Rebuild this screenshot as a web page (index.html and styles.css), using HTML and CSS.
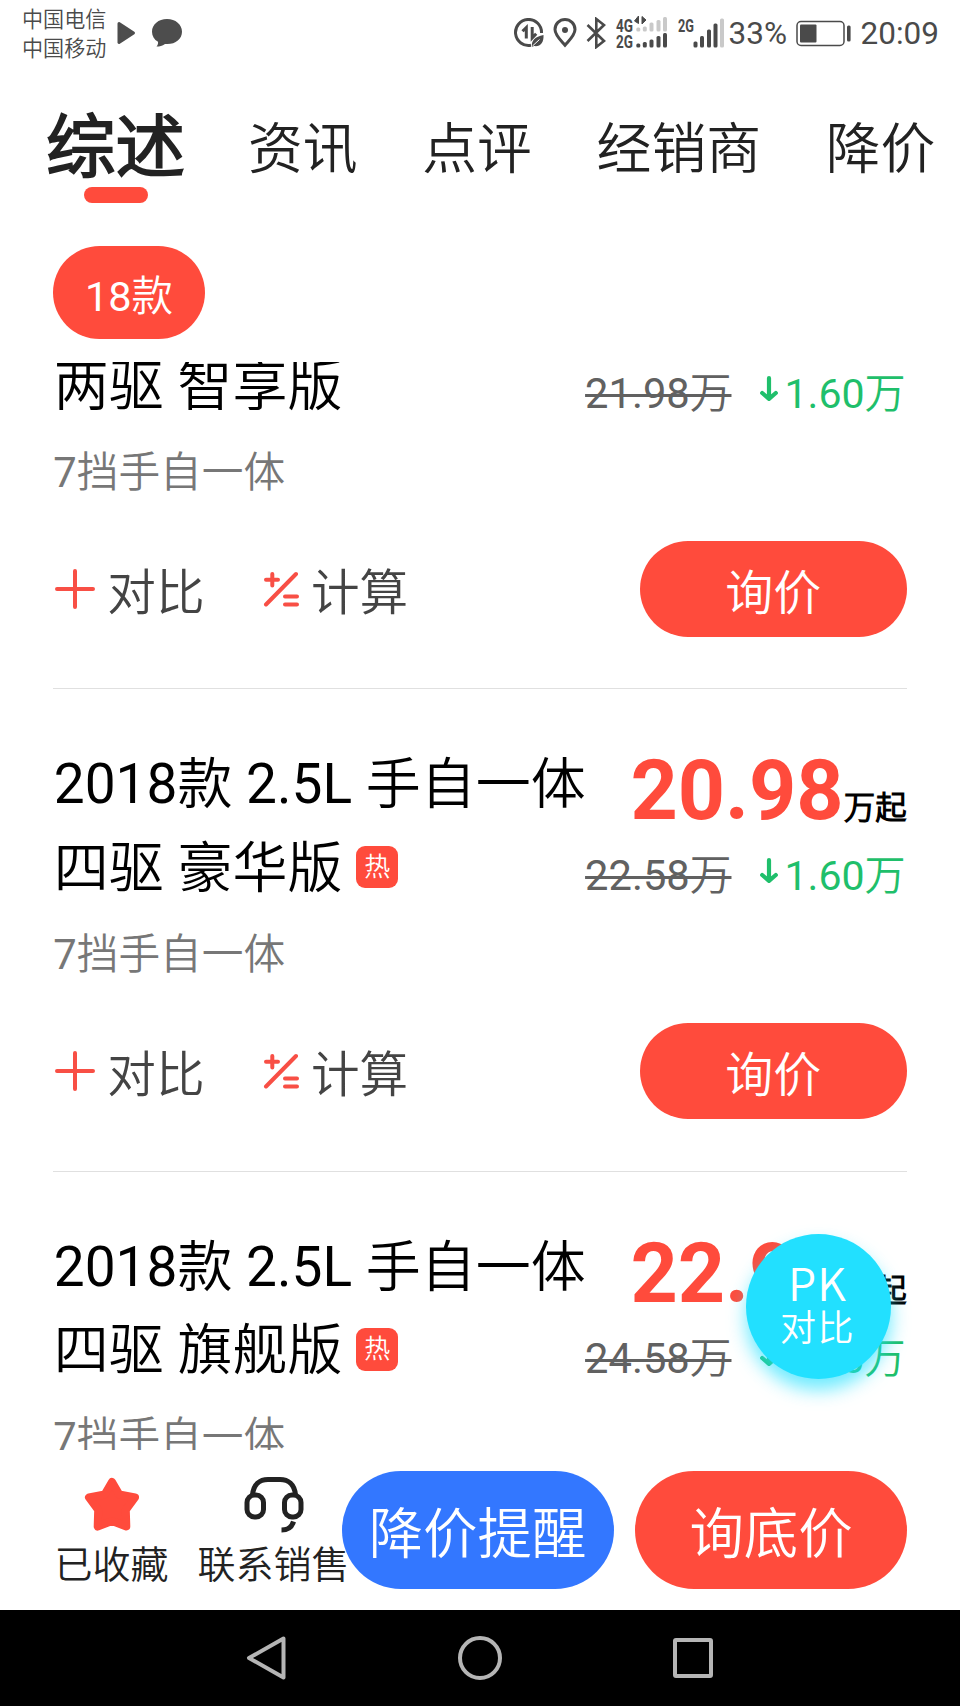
FILE: index.html
```html
<!DOCTYPE html>
<html lang="zh-CN">
<head>
<meta charset="utf-8">
<title>综述</title>
<link rel="stylesheet" href="styles.css">
</head>
<body>
<svg width="0" height="0" class="defs">
  <symbol id="plus" viewBox="0 0 40 40"><path d="M20 2v36M2 20h36" fill="none" stroke="#f84f45" stroke-width="4" stroke-linecap="round"/></symbol>
  <symbol id="calc" viewBox="0 0 36 36"><path d="M9.300 3v11.500M3 8.800h12M33 3L3 33.500M22 25.500h12M22 33.500h12" fill="none" stroke="#f84f45" stroke-width="4" stroke-linecap="round"/></symbol>
  <symbol id="down" viewBox="0 0 18 26"><path d="M9 2.200v20M2.200 17L9 22.800 15.800 17" fill="none" stroke="#1fbf6b" stroke-width="4.200" stroke-linecap="round" stroke-linejoin="round"/></symbol>
</svg>
<div class="screen">
  <header class="status">
    <div class="carriers"><span>中国电信</span><span>中国移动</span></div>
    <svg class="play" width="19" height="24" viewBox="0 0 19 24"><path d="M2 2.500L16.500 12 2 21.500z" fill="#4d4d4d" stroke="#4d4d4d" stroke-width="3" stroke-linejoin="round"/></svg>
    <svg class="chat" width="32" height="30" viewBox="0 0 32 30"><path d="M16 1C7.500 1 1 6.500 1 13.700c0 4.300 2.200 7.800 6 10.100.3 1.700-.2 3.300-1.500 4.800 3.200 0 5.800-1 8.500-2.700C23.500 27 31 21.500 31 13.700 31 6.500 24.500 1 16 1z" fill="#4d4d4d"/></svg>
    <div class="status-right">
      <svg width="30" height="30" viewBox="0 0 30 30"><path d="M17 27.200A13 13 0 1 1 27.500 15" fill="none" stroke="#4a4a4a" stroke-width="3"/><path d="M12.300 20.500V9.500L8.500 13.300M18.200 9v11l4-4.300" fill="none" stroke="#4a4a4a" stroke-width="3"/><path d="M29.500 17c.5 8-3.500 12-9.500 11l-2 1c-1-6 3-10.500 11.500-12z" fill="#4a4a4a"/><path d="M18.500 28l7-6.500" stroke="#fff" stroke-width="1"/></svg>
      <svg class="pin" width="24" height="30" viewBox="0 0 24 30"><path d="M12 27.300C7 21.500 2 17 2 11.500a10 10 0 0 1 20 0C22 17 17 21.500 12 27.300z" fill="none" stroke="#4a4a4a" stroke-width="3"/><circle cx="12" cy="12" r="3" fill="#4a4a4a"/></svg>
      <svg class="bt" width="20" height="32" viewBox="0 0 20 32"><path d="M1.500 8L18 24l-7.700 6V2L18 8 1.500 24" fill="none" stroke="#4a4a4a" stroke-width="2.600"/></svg>
      <svg class="sig" width="110" height="34" viewBox="0 0 110 34">
        <g class="net"><text x="0" y="15.500" textLength="17" lengthAdjust="spacingAndGlyphs">4G</text><text x="0" y="32" textLength="17" lengthAdjust="spacingAndGlyphs">2G</text><text x="62" y="15.500" textLength="16" lengthAdjust="spacingAndGlyphs">2G</text></g>
        <path d="M22.500 7.500V0l-4 5zM26 .5V8l4-4z" fill="#4a4a4a" stroke="#4a4a4a" stroke-width="1"/>
        <g fill="#c9c9c9"><rect x="20.300" y="11.500" width="4" height="4" rx="1.500"/><rect x="26.800" y="10.500" width="4" height="5" rx="1.500"/><rect x="33.500" y="6.500" width="4" height="9" rx="1.500"/><rect x="40.500" y="4" width="4" height="11.500" rx="1.500"/><rect x="47" y="1" width="4" height="14.500" rx="1.500"/><rect x="104" y="2.500" width="4" height="29" rx="1.500"/></g>
        <g fill="#4a4a4a"><rect x="20.300" y="27.500" width="4" height="4" rx="1.500"/><rect x="26.800" y="26" width="4" height="5.500" rx="1.500"/><rect x="33.500" y="23.500" width="4" height="8" rx="1.500"/><rect x="40.500" y="20" width="4" height="11.500" rx="1.500"/><rect x="47" y="17" width="4" height="14.500" rx="1.500"/><rect x="77.500" y="25.500" width="4" height="6" rx="1.500"/><rect x="84" y="20" width="4" height="11.500" rx="1.500"/><rect x="91" y="13.500" width="4" height="18" rx="1.500"/><rect x="97.500" y="7.500" width="4" height="24" rx="1.500"/></g>
      </svg>
      <span class="pct">33%</span>
      <svg class="batt" width="56" height="27" viewBox="0 0 56 27"><rect x="1" y="1.500" width="47" height="24" rx="4" fill="none" stroke="#4a4a4a" stroke-width="1.500"/><rect x="4" y="4.500" width="16.500" height="18" rx="1" fill="#4a4a4a"/><rect x="51" y="5.500" width="3.600" height="16" rx="1.500" fill="#4a4a4a"/></svg>
      <span class="time">20:09</span>
    </div>
  </header>

  <nav class="tabs">
    <span class="tab active">综述</span><span class="tab">资讯</span><span class="tab">点评</span><span class="tab">经销商</span><span class="tab">降价</span>
  </nav>

  <div class="filter"><span class="pill">18款</span></div>

  <main class="list">
    <section class="card first">
      <div class="head">
        <div class="title">两驱 智享版</div>
        <div class="prices"><div class="sub-price"><s>21.98万</s><span class="drop"><svg width="18" height="26"><use href="#down"/></svg>1.60万</span></div></div>
      </div>
      <div class="gear">7挡手自一体</div>
      <div class="actions"><span class="act cmp"><svg width="40" height="40"><use href="#plus"/></svg><span>对比</span></span><span class="act"><svg width="36" height="36"><use href="#calc"/></svg><span>计算</span></span><span class="ask">询价</span></div>
    </section>
    <section class="card">
      <div class="head">
        <div class="title">2018款 2.5L 手自一体<br>四驱 豪华版<span class="hot">热</span></div>
        <div class="prices"><div class="price"><b>20.98</b><span>万起</span></div><div class="sub-price"><s>22.58万</s><span class="drop"><svg width="18" height="26"><use href="#down"/></svg>1.60万</span></div></div>
      </div>
      <div class="gear">7挡手自一体</div>
      <div class="actions"><span class="act cmp"><svg width="40" height="40"><use href="#plus"/></svg><span>对比</span></span><span class="act"><svg width="36" height="36"><use href="#calc"/></svg><span>计算</span></span><span class="ask">询价</span></div>
    </section>
    <section class="card">
      <div class="head">
        <div class="title">2018款 2.5L 手自一体<br>四驱 旗舰版<span class="hot">热</span></div>
        <div class="prices"><div class="price"><b>22.98</b><span>万起</span></div><div class="sub-price"><s>24.58万</s><span class="drop"><svg width="18" height="26"><use href="#down"/></svg>1.60万</span></div></div>
      </div>
      <div class="gear">7挡手自一体</div>
    </section>
  </main>

  <footer class="bar">
    <div class="tool fav">
      <svg width="56" height="56" viewBox="0 0 56 56"><path d="M28 5L35.300 17.500 51 20.500 41.800 33 42.300 49.500 28 44 13.700 49.500 14.200 33 5 20.500 20.700 17.500z" fill="#ff4b3c" stroke="#ff4b3c" stroke-width="8" stroke-linejoin="round"/></svg>
      <span>已收藏</span>
    </div>
    <div class="tool contact">
      <svg width="60" height="58" viewBox="0 0 60 58"><g fill="none" stroke="#222" stroke-width="5"><path d="M8.500 19C9.500 8 16 3.500 24 3.500h12C44 3.500 50.500 8 51.500 19"/><rect x="3" y="19" width="16.500" height="22" rx="7.500"/><rect x="40.500" y="19" width="16.500" height="22" rx="7.500"/><path d="M49.500 45.500C48 51 43.500 54 37.500 54"/></g></svg>
      <span>联系销售</span>
    </div>
    <span class="cta blue">降价提醒</span>
    <span class="cta red">询底价</span>
  </footer>

  <div class="sysnav">
    <svg width="44" height="48" viewBox="0 0 44 48"><path d="M39.500 4.500L5 24l34.500 19.500z" fill="none" stroke="#b5b5b5" stroke-width="4" stroke-linejoin="round"/></svg>
    <svg width="48" height="48" viewBox="0 0 48 48"><circle cx="24" cy="24" r="20" fill="none" stroke="#b5b5b5" stroke-width="4"/></svg>
    <svg width="44" height="44" viewBox="0 0 44 44"><rect x="4" y="4" width="36" height="36" rx="1" fill="none" stroke="#b5b5b5" stroke-width="4"/></svg>
  </div>

  <div class="pk"><span class="pk-en">PK</span><span class="pk-zh">对比</span></div>
</div>
</body>
</html>
```
FILE: styles.css
```css
* { box-sizing: border-box; }
body { margin: 0; background: #fff; font-family: Roboto, "Noto Sans CJK SC DemiLight", "Noto Sans CJK SC", sans-serif; font-weight: 400; }
svg { display: block; flex: none; }
.defs { position: absolute; }
.screen { position: relative; width: 960px; height: 1706px; overflow: hidden; display: flex; flex-direction: column; white-space: nowrap; }

.status { height: 66px; flex: none; display: flex; align-items: center; padding: 0 21px 0 22px; color: #4a4a4a; }
.carriers { display: flex; flex-direction: column; font-size: 21.1px; line-height: 29px; padding-top: 1px; }
.play { margin-left: 11px; }
.chat { margin-left: 15px; }
.status-right { margin-left: auto; display: flex; align-items: center; }
.pin { margin-left: 9px; }
.bt { margin-left: 9px; }
.sig { margin-left: 10px; overflow: visible; }
.net { font: 700 17.500px Roboto, sans-serif; fill: #4a4a4a; }
.pct, .time { font-size: 31.5px; line-height: 66px; padding-top: 2px; }
.pct { margin-left: 3px; }
.batt { margin-left: 8.5px; }
.time { margin-left: 9px; }

.tabs { height: 180px; flex: none; display: flex; padding: 0 0 0 46px; color: #222; }
.tab { font-size: 54.8px; line-height: 80px; padding-top: 42.5px; margin-right: 64.7px; }
.tab.active { font-size: 69.5px; font-weight: 700; line-height: 82px; padding-top: 42px; display: flex; flex-direction: column; align-items: center; margin-right: 63px; }
.tab.active::after { content: ""; width: 64px; height: 16px; margin-top: -3px; border-radius: 8px; background: #ff4b3c; }

.filter { height: 116px; flex: none; padding-left: 53px; }
.pill { display: flex; align-items: center; justify-content: center; width: 152px; height: 93px; border-radius: 47px; background: #ff4b3c; color: #fff; font-size: 41.5px; }

.list { height: 1088px; flex: none; overflow: hidden; padding: 0 53.3px; }
.card { height: 482.4px; padding-top: 52px; border-bottom: 1.5px solid #e0e0e0; }
.card:last-child { border: 0; }
.card.first { display: flow-root; height: 327.2px; padding-top: 0; }
.card.first .head { margin-top: -19.5px; height: 83.5px; }
.head { height: 167px; display: flex; justify-content: space-between; }
.title { font-size: 55px; line-height: 83.5px; padding: 2px 0 0 0.5px; color: #000; }
.hot { display: inline-block; width: 42.5px; height: 42.5px; line-height: 42px; margin-left: 13.5px; border-radius: 9px; background: #ff4b3c; color: #fff; font-size: 26px; text-align: center; vertical-align: 11px; }
.prices { display: flex; flex-direction: column; align-items: flex-end; margin-left: -24px; }
.price { display: flex; align-items: baseline; height: 99px; line-height: 99px; }
.price b { font-size: 82.5px; color: #ff4b3c; font-weight: 700; }
.price span { font-size: 31.5px; font-weight: 700; color: #000; padding-top: 0; }
.sub-price { display: flex; font-size: 41.7px; line-height: 72px; }
.card.first .sub-price { padding-top: 15.5px; }
.sub-price s { color: #616161; text-decoration-thickness: 2.5px; }
.drop { color: #1fbf6b; display: flex; margin: 0 1px 0 28.5px; font-size: 41.1px; }
.drop svg { margin: 18px 6.5px 0 0; }
.gear { font-size: 41.7px; line-height: 60px; padding-top: 17px; color: #777; }
.actions { display: flex; align-items: center; height: 96px; margin-top: 37.5px; }
.act { display: flex; align-items: center; font-size: 48.6px; line-height: 90px; color: #444; }
.act svg { margin: 0 12.5px 0 1.5px; }
.act span { padding-top: 10px; }
.cmp { margin-right: 56.5px; }
.ask { margin-left: auto; width: 267px; height: 96px; border-radius: 48px; background: #ff4b3c; color: #fff; font-size: 48px; line-height: 106px; text-align: center; }

.bar { height: 160px; flex: none; display: flex; padding-left: 54.5px; background: #fff; color: #222; }
.tool { display: flex; flex-direction: column; align-items: center; font-size: 38px; line-height: 56px; padding-top: 26px; }
.tool svg { margin-bottom: 3px; height: 58px; }
.contact { margin-left: 29px; width: 152px; }
.cta { position: relative; flex: none; height: 118px; width: 272px; border-radius: 59px; margin-top: 21px; color: #fff; font-size: 54.4px; line-height: 128px; text-align: center; }
.blue { background: #3377ff; margin-left: -8px; }
.red { background: #ff4b3c; margin-left: 21.5px; }

.sysnav { height: 96px; flex: none; background: #000; display: flex; align-items: center; justify-content: space-between; padding: 0 245px 0 244px; }

.pk { position: absolute; left: 746px; top: 1234px; width: 145px; height: 145px; border-radius: 50%; background: #22e0ff; color: #fff; box-shadow: 0 11px 18px rgba(34, 224, 255, .65); display: flex; flex-direction: column; align-items: center; font-family: "Noto Sans CJK SC DemiLight", "Noto Sans CJK SC", sans-serif; padding: 19px 2px 0 0; }
.pk-en { font-size: 45px; line-height: 58px; letter-spacing: 1px; }
.pk-zh { font-size: 36px; line-height: 28px; letter-spacing: 1.5px; }
```
